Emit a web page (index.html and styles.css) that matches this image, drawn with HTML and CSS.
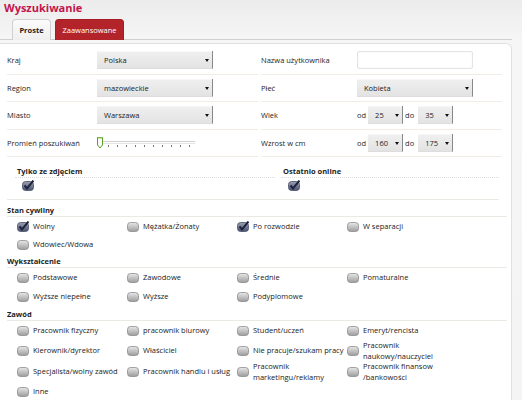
FILE: index.html
```html
<!DOCTYPE html>
<html lang="pl">
<head>
<meta charset="utf-8">
<title>Wyszukiwanie</title>
<link rel="stylesheet" href="styles.css">
</head>
<body>
<svg width="0" height="0" class="defs">
  <defs>
    <linearGradient id="gOff" x1="0" y1="0" x2="0" y2="1">
      <stop offset="0" stop-color="#e8e8e8"/>
      <stop offset="1" stop-color="#9c9c9c"/>
    </linearGradient>
    <linearGradient id="gOn" x1="0" y1="0" x2="0" y2="1">
      <stop offset="0" stop-color="#9aa0b0"/>
      <stop offset="1" stop-color="#4b5470"/>
    </linearGradient>
    <symbol id="cbOff" viewBox="0 0 12 11">
      <rect x="0.5" y="1.5" width="11" height="9" rx="3" fill="url(#gOff)" stroke="#8c8c8c" stroke-width="0.8"/>
    </symbol>
    <symbol id="cbOn" viewBox="0 0 12 11">
      <rect x="0.5" y="1.5" width="11" height="9" rx="3" fill="url(#gOn)" stroke="#4a5068" stroke-width="0.8"/>
      <path d="M2.5 5.5 L5 8.5 L11.5 0.5" fill="none" stroke="#1d2440" stroke-width="2"/>
    </symbol>
  </defs>
</svg>

<h1 class="title">Wyszukiwanie</h1>
<div class="tabs">
  <div class="tab">Proste</div>
  <div class="tab active">Zaawansowane</div>
</div>

<div class="panel">
  <div class="fields">
    <div class="col left">
      <div class="row"><span class="lab">Kraj</span><div class="select wide"><span>Polska</span><i class="arr"></i></div></div>
      <div class="row"><span class="lab">Region</span><div class="select wide"><span>mazowieckie</span><i class="arr"></i></div></div>
      <div class="row"><span class="lab">Miasto</span><div class="select wide"><span>Warszawa</span><i class="arr"></i></div></div>
      <div class="row"><span class="lab">Promień poszukiwań</span>
        <svg class="slider" width="102" height="14" viewBox="0 0 102 14">
          <line x1="3" y1="5.5" x2="99" y2="5.5" stroke="#cfcfcf" stroke-width="1"/>
          <line x1="3" y1="7.5" x2="99" y2="7.5" stroke="#e4e4e4" stroke-width="1"/>
          <g stroke="#777" stroke-width="1">
            <line x1="12.5" y1="9" x2="12.5" y2="11"/>
            <line x1="21.5" y1="9" x2="21.5" y2="11"/>
            <line x1="30.5" y1="9" x2="30.5" y2="11"/>
            <line x1="39.5" y1="9" x2="39.5" y2="11"/>
            <line x1="48.5" y1="9" x2="48.5" y2="11"/>
            <line x1="57.5" y1="9" x2="57.5" y2="11"/>
            <line x1="66.5" y1="9" x2="66.5" y2="11"/>
            <line x1="75.5" y1="9" x2="75.5" y2="11"/>
            <line x1="84.5" y1="9" x2="84.5" y2="11"/>
            <line x1="93.5" y1="9" x2="93.5" y2="11"/>
          </g>
          <path d="M1.5 1.5 H6.5 V9 L4 12 L1.5 9 Z" fill="#fafafa" stroke="#5aa02c" stroke-width="1"/>
          <line x1="2" y1="2" x2="6" y2="2" stroke="#8fd15a" stroke-width="1"/>
        </svg>
      </div>
    </div>
    <div class="col right">
      <div class="row"><span class="lab">Nazwa użytkownika</span><div class="input"></div></div>
      <div class="row"><span class="lab">Płeć</span><div class="select wide"><span>Kobieta</span><i class="arr"></i></div></div>
      <div class="row"><span class="lab">Wiek</span>
        <div class="range"><span>od</span><div class="select small"><span>25</span><i class="arr"></i></div><span class="do">do</span><div class="select small"><span>35</span><i class="arr"></i></div></div>
      </div>
      <div class="row"><span class="lab">Wzrost w cm</span>
        <div class="range"><span>od</span><div class="select small"><span>160</span><i class="arr"></i></div><span class="do">do</span><div class="select small"><span>175</span><i class="arr"></i></div></div>
      </div>
    </div>
  </div>

  <div class="flags">
    <div class="flag left">
      <div class="flag-lab">Tylko ze zdjęciem</div>
      <svg class="cb" width="12" height="11"><use href="#cbOn"/></svg>
    </div>
    <div class="flag right">
      <div class="flag-lab">Ostatnio online</div>
      <svg class="cb" width="12" height="11"><use href="#cbOn"/></svg>
    </div>
  </div>

  <div class="section stan">
    <div class="head">Stan cywilny</div>
    <div class="opts">
      <label class="opt"><svg class="cb" width="12" height="11"><use href="#cbOn"/></svg><span>Wolny</span></label>
      <label class="opt"><svg class="cb" width="12" height="11"><use href="#cbOff"/></svg><span>Mężatka/Żonaty</span></label>
      <label class="opt"><svg class="cb" width="12" height="11"><use href="#cbOn"/></svg><span>Po rozwodzie</span></label>
      <label class="opt"><svg class="cb" width="12" height="11"><use href="#cbOff"/></svg><span>W separacji</span></label>
      <label class="opt"><svg class="cb" width="12" height="11"><use href="#cbOff"/></svg><span>Wdowiec/Wdowa</span></label>
    </div>
  </div>

  <div class="section wyk">
    <div class="head">Wykształcenie</div>
    <div class="opts">
      <label class="opt"><svg class="cb" width="12" height="11"><use href="#cbOff"/></svg><span>Podstawowe</span></label>
      <label class="opt"><svg class="cb" width="12" height="11"><use href="#cbOff"/></svg><span>Zawodowe</span></label>
      <label class="opt"><svg class="cb" width="12" height="11"><use href="#cbOff"/></svg><span>Średnie</span></label>
      <label class="opt"><svg class="cb" width="12" height="11"><use href="#cbOff"/></svg><span>Pomaturalne</span></label>
      <label class="opt"><svg class="cb" width="12" height="11"><use href="#cbOff"/></svg><span>Wyższe niepełne</span></label>
      <label class="opt"><svg class="cb" width="12" height="11"><use href="#cbOff"/></svg><span>Wyższe</span></label>
      <label class="opt"><svg class="cb" width="12" height="11"><use href="#cbOff"/></svg><span>Podyplomowe</span></label>
    </div>
  </div>

  <div class="section zaw">
    <div class="head">Zawód</div>
    <div class="opts">
      <label class="opt"><svg class="cb" width="12" height="11"><use href="#cbOff"/></svg><span>Pracownik fizyczny</span></label>
      <label class="opt"><svg class="cb" width="12" height="11"><use href="#cbOff"/></svg><span>pracownik biurowy</span></label>
      <label class="opt"><svg class="cb" width="12" height="11"><use href="#cbOff"/></svg><span>Student/uczeń</span></label>
      <label class="opt"><svg class="cb" width="12" height="11"><use href="#cbOff"/></svg><span>Emeryt/rencista</span></label>
      <label class="opt"><svg class="cb" width="12" height="11"><use href="#cbOff"/></svg><span>Kierownik/dyrektor</span></label>
      <label class="opt"><svg class="cb" width="12" height="11"><use href="#cbOff"/></svg><span>Właściciel</span></label>
      <label class="opt"><svg class="cb" width="12" height="11"><use href="#cbOff"/></svg><span>Nie pracuje/szukam pracy</span></label>
      <label class="opt"><svg class="cb" width="12" height="11"><use href="#cbOff"/></svg><span>Pracownik<br>naukowy/nauczyciel</span></label>
      <label class="opt"><svg class="cb" width="12" height="11"><use href="#cbOff"/></svg><span>Specjalista/wolny zawód</span></label>
      <label class="opt"><svg class="cb" width="12" height="11"><use href="#cbOff"/></svg><span>Pracownik handlu i usług</span></label>
      <label class="opt"><svg class="cb" width="12" height="11"><use href="#cbOff"/></svg><span>Pracownik<br>marketingu/reklamy</span></label>
      <label class="opt"><svg class="cb" width="12" height="11"><use href="#cbOff"/></svg><span>Pracownik finansow<br>/bankowości</span></label>
      <label class="opt"><svg class="cb" width="12" height="11"><use href="#cbOff"/></svg><span>Inne</span></label>
    </div>
  </div>
</div>
</body>
</html>
```

FILE: styles.css
```css
* { box-sizing: border-box; }

html, body {
  margin: 0;
  padding: 0;
}

body {
  width: 522px;
  height: 400px;
  overflow: hidden;
  font-family: "Open Sans", "DejaVu Sans", sans-serif;
  font-size: 7.5px;
  color: #1e1e1e;
  background: linear-gradient(#ececec 0px, #f6f6f6 40px, #f4f4f4 100%);
}

.defs { position: absolute; }

.title {
  margin: 0;
  padding: 1px 0 0 4px;
  height: 17px;
  font-size: 11px;
  line-height: 14px;
  font-weight: bold;
  color: #c4154d;
}

.tabs {
  display: flex;
  gap: 4px;
  padding-left: 12px;
  width: 512px;
  height: 23px;
  padding-top: 2px;
  border-bottom: 1px solid #cfcfcf;
}

.tab {
  width: 39px;
  height: 21px;
  text-align: center;
  line-height: 21px;
  font-weight: bold;
  font-size: 7.5px;
  color: #222;
  background: linear-gradient(#fbfbfb, #efefef);
  border: 1px solid #d0d0d0;
  border-bottom: none;
  border-radius: 4px 4px 0 0;
}

.tab.active {
  width: 69px;
  font-weight: normal;
  color: #fff;
  background: #b3242a;
  border-color: #a31d22;
}

.panel {
  margin-top: 3px;
  width: 512px;
  height: 360px;
  background: #fff;
  border: 1px solid #e0e0e0;
  border-left: none;
  border-radius: 0 6px 0 0;
  padding-top: 3px;
}

.fields {
  display: flex;
}

.col.left {
  width: 258px;
  padding-left: 7px;
}

.col.right {
  width: 244px;
  padding-left: 3px;
}

.row {
  display: flex;
  align-items: center;
  height: 27.5px;
  border-bottom: 1px solid #f1ece6;
}

.col.left .lab { width: 90px; }
.col.right .lab { width: 96px; }

.select {
  position: relative;
  height: 18px;
  line-height: 18px;
  padding-left: 7px;
  background: linear-gradient(#f0f0f0, #e3e3e3);
  border-right: 1px solid #888;
  border-bottom: 1px solid #ddd;
  box-shadow: inset 0 1px 0 #f7f7f7;
  color: #222;
}

.select.wide { width: 116px; }
.select.small { width: 35px; }

.arr {
  position: absolute;
  right: 3px;
  top: 8px;
  width: 0;
  height: 0;
  border-left: 2px solid transparent;
  border-right: 2px solid transparent;
  border-top: 3px solid #111;
}

.input {
  width: 116px;
  height: 18px;
  background: #fff;
  border: 1px solid #e4e4e4;
  box-shadow: inset 0 0 2px #eee;
  border-radius: 2px;
}

.range {
  display: flex;
  align-items: center;
  gap: 2px;
}

.range .do { margin-right: 2px; }

.slider { display: block; margin-left: -1px; }

.flags {
  display: flex;
  padding: 8px 0 0 0;
  height: 43px;
  margin: 0 12px 0 7px;
  border-bottom: 1px solid #ece8e4;
}

.flag.left { width: 268px; padding-left: 8px; }
.flag.right { width: 224px; padding-left: 6px; }

.flag-lab {
  font-weight: bold;
  line-height: 12px;
  padding-left: 2px;
  border-bottom: 1px dotted #ddd;
}

.flag .cb {
  display: block;
  margin: 2px 0 0 7px;
}

.section {
  margin-left: 7px;
  width: 500px;
}

.head {
  font-weight: bold;
  line-height: 12px;
  border-bottom: 1px solid #ece8e4;
}

.stan { margin-top: 4px; }
.wyk .head, .zaw .head { padding-top: 2px; }

.opts {
  display: grid;
  grid-template-columns: repeat(4, 110px);
  padding-left: 10px;
}

.stan .opt { min-height: 18px; }
.wyk .opt, .zaw .opt { min-height: 19px; }
.zaw .opt { line-height: 10.5px; }

.opt {
  display: flex;
  align-items: center;
  gap: 4px;
  line-height: 11px;
  color: #222;
}

.opt .cb { flex: none; }
```
